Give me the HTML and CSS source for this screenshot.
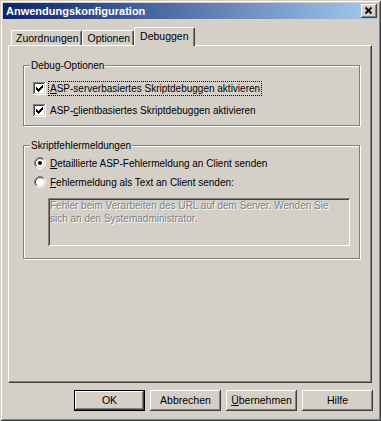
FILE: index.html
```html
<!DOCTYPE html>
<html lang="de">
<head>
    <meta charset="UTF-8">
    <title>Anwendungskonfiguration</title>
    <link rel="stylesheet" href="styles.css">
</head>
<body>
    <div class="window">
        <!-- title bar -->
        <div class="titlebar">
            <span class="title">Anwendungskonfiguration</span>
            <span class="close-btn">
                <svg width="16" height="14" viewBox="0 0 16 14">
                    <path d="M4.5 3.5L10.5 9.5M10.5 3.5L4.5 9.5" stroke="#000" stroke-width="1.8"/>
                </svg>
            </span>
        </div>

        <!-- tabs -->
        <div class="tabs">
            <div class="tab">Zuordnungen</div>
            <div class="tab">Optionen</div>
            <div class="tab active">Debuggen</div>
        </div>

        <div class="panel">
            <fieldset class="group group-debug">
                <legend>Debug-Optionen</legend>
                <div class="option">
                    <svg class="check" width="13" height="13" viewBox="0 0 13 13">
                        <rect width="13" height="13" fill="#fff"/>
                        <path fill="#808080" d="M0 0h12v1H1v11H0z"/>
                        <path fill="#404040" d="M1 1h10v1H2v9H1z"/>
                        <path fill="#fff" d="M12 0h1v13H0v-1h12z"/>
                        <path fill="#d4d0c8" d="M11 1h1v11H1v-1h10z"/>
                        <path fill="#000" d="M3 5V8H4V9H5V10H6V9H7V8H8V7H9V6H10V3H9V4H8V5H7V6H6V7H5V6H4V5Z"/>
                    </svg>
                    <span class="label focus"><u>A</u>SP-serverbasiertes Skriptdebuggen aktivieren</span>
                </div>
                <div class="option">
                    <svg class="check" width="13" height="13" viewBox="0 0 13 13">
                        <rect width="13" height="13" fill="#fff"/>
                        <path fill="#808080" d="M0 0h12v1H1v11H0z"/>
                        <path fill="#404040" d="M1 1h10v1H2v9H1z"/>
                        <path fill="#fff" d="M12 0h1v13H0v-1h12z"/>
                        <path fill="#d4d0c8" d="M11 1h1v11H1v-1h10z"/>
                        <path fill="#000" d="M3 5V8H4V9H5V10H6V9H7V8H8V7H9V6H10V3H9V4H8V5H7V6H6V7H5V6H4V5Z"/>
                    </svg>
                    <span class="label">ASP-<u>c</u>lientbasiertes Skriptdebuggen aktivieren</span>
                </div>
            </fieldset>

            <fieldset class="group group-errors">
                <legend>Skriptfehlermeldungen</legend>
                <div class="option">
                    <svg class="radio" width="12" height="12" viewBox="0 0 12 12">
                        <circle cx="6" cy="6" r="5" fill="#fff"/>
                        <path d="M2.11 9.89A5.5 5.5 0 0 1 9.89 2.11" fill="none" stroke="#808080"/>
                        <path d="M9.89 2.11A5.5 5.5 0 0 1 2.11 9.89" fill="none" stroke="#fff"/>
                        <path d="M2.82 9.18A4.5 4.5 0 0 1 9.18 2.82" fill="none" stroke="#404040"/>
                        <path d="M9.18 2.82A4.5 4.5 0 0 1 2.82 9.18" fill="none" stroke="#d4d0c8"/>
                        <circle cx="6" cy="6" r="2" fill="#000"/>
                    </svg>
                    <span class="label"><u>D</u>etaillierte ASP-Fehlermeldung an Client senden</span>
                </div>
                <div class="option">
                    <svg class="radio" width="12" height="12" viewBox="0 0 12 12">
                        <circle cx="6" cy="6" r="5" fill="#fff"/>
                        <path d="M2.11 9.89A5.5 5.5 0 0 1 9.89 2.11" fill="none" stroke="#808080"/>
                        <path d="M9.89 2.11A5.5 5.5 0 0 1 2.11 9.89" fill="none" stroke="#fff"/>
                        <path d="M2.82 9.18A4.5 4.5 0 0 1 9.18 2.82" fill="none" stroke="#404040"/>
                        <path d="M9.18 2.82A4.5 4.5 0 0 1 2.82 9.18" fill="none" stroke="#d4d0c8"/>
                    </svg>
                    <span class="label"><u>F</u>ehlermeldung als Text an Client senden:</span>
                </div>
                <div class="textbox">Fehler beim Verarbeiten des URL auf dem Server. Wenden Sie<br>sich an den Systemadministrator.</div>
            </fieldset>
        </div>

        <!-- dialog buttons -->
        <div class="buttons">
            <div class="button default">OK</div>
            <div class="button">Abbrechen</div>
            <div class="button"><u>Ü</u>bernehmen</div>
            <div class="button">Hilfe</div>
        </div>
    </div>
</body>
</html>
```

FILE: styles.css
```css
* {
    box-sizing: border-box;
}

body {
    margin: 0;
    background: #d4d0c8;
    font-family: "Liberation Sans", Arial, sans-serif;
    font-size: 10px;
    color: #000;
}

.window {
    width: 381px;
    height: 421px;
    padding: 3px;
    background: #d4d0c8;
    box-shadow: inset 1px 1px 0 #d4d0c8, inset -1px -1px 0 #404040,
                inset 2px 2px 0 #fff, inset -2px -2px 0 #808080;
}

.titlebar {
    display: flex;
    align-items: center;
    justify-content: space-between;
    height: 16px;
    padding: 0 1px 0 3px;
    background: linear-gradient(to right, #0a246a, #a6caf0);
}

.title {
    color: #fff;
    font-size: 11px;
    font-weight: bold;
}

.close-btn {
    display: flex;
    width: 16px;
    height: 14px;
    background: #d4d0c8;
    box-shadow: inset -1px -1px 0 #404040, inset 1px 1px 0 #fff,
                inset -2px -2px 0 #808080;
}

/* tabs */
.tabs {
    display: flex;
    align-items: flex-end;
    height: 18px;
    margin-top: 8px;
    padding-left: 8px;
    font-size: 10.5px;
}

.tab {
    height: 15px;
    line-height: 14px;
    padding: 0 3px 0 4px;
    border-top: 1px solid #fff;
    border-left: 1px solid #fff;
    border-right: 1px solid #404040;
    border-radius: 2px 2px 0 0;
    box-shadow: inset -1px 0 0 #808080;
}

.tab.active {
    position: relative;
    z-index: 1;
    height: 19px;
    margin-bottom: -1px;
    line-height: 16px;
    padding: 0 5px 0 5px;
    background: #d4d0c8;
}

.panel {
    height: 338px;
    margin: 0 6px 0 5px;
    padding: 13px 11px 0 14px;
    border-top: 1px solid #fff;
    border-left: 1px solid #fff;
    border-right: 1px solid #404040;
    border-bottom: 1px solid #404040;
    box-shadow: inset -1px -1px 0 #808080;
}

/* group boxes */
.group {
    margin: 0;
    padding: 8px 9px 7px 9px;
    border: 1px solid #808080;
    box-shadow: 1px 1px 0 #fff, inset 1px 1px 0 #fff;
}

.group legend {
    margin-left: -3px;
    padding: 0 1px;
    line-height: 13px;
    background: #d4d0c8;
}

.group-errors {
    margin-top: 13px;
    padding-top: 3px;
    padding-bottom: 12px;
}

.option {
    display: flex;
    align-items: center;
    height: 16px;
}

.option + .option {
    margin-top: 6px;
}

.group-errors .option + .option {
    margin-top: 3px;
}

.check,
.radio {
    flex: none;
}

.radio {
    margin-left: 1px;
}

.label {
    margin-left: 2px;
    padding: 0 1px;
    line-height: 13px;
    border: 1px solid transparent;
}

.label.focus {
    border: 1px dotted #000;
}

.textbox {
    height: 48px;
    margin: 8px 0 0 15px;
    padding: 1px 2px;
    line-height: 13px;
    color: #808080;
    text-shadow: 1px 1px 0 #fff;
    box-shadow: inset 1px 1px 0 #808080, inset -1px -1px 0 #fff,
                inset 2px 2px 0 #404040, inset -2px -2px 0 #d4d0c8;
}

/* dialog buttons */
.buttons {
    display: flex;
    justify-content: flex-end;
    gap: 5px;
    margin-top: 7px;
    padding-right: 5px;
    font-size: 10.5px;
}

.button {
    width: 71px;
    height: 21px;
    line-height: 21px;
    text-align: center;
    box-shadow: inset -1px -1px 0 #404040, inset 1px 1px 0 #fff,
                inset -2px -2px 0 #808080;
}

.button.default {
    line-height: 19px;
    border: 1px solid #000;
}
```
